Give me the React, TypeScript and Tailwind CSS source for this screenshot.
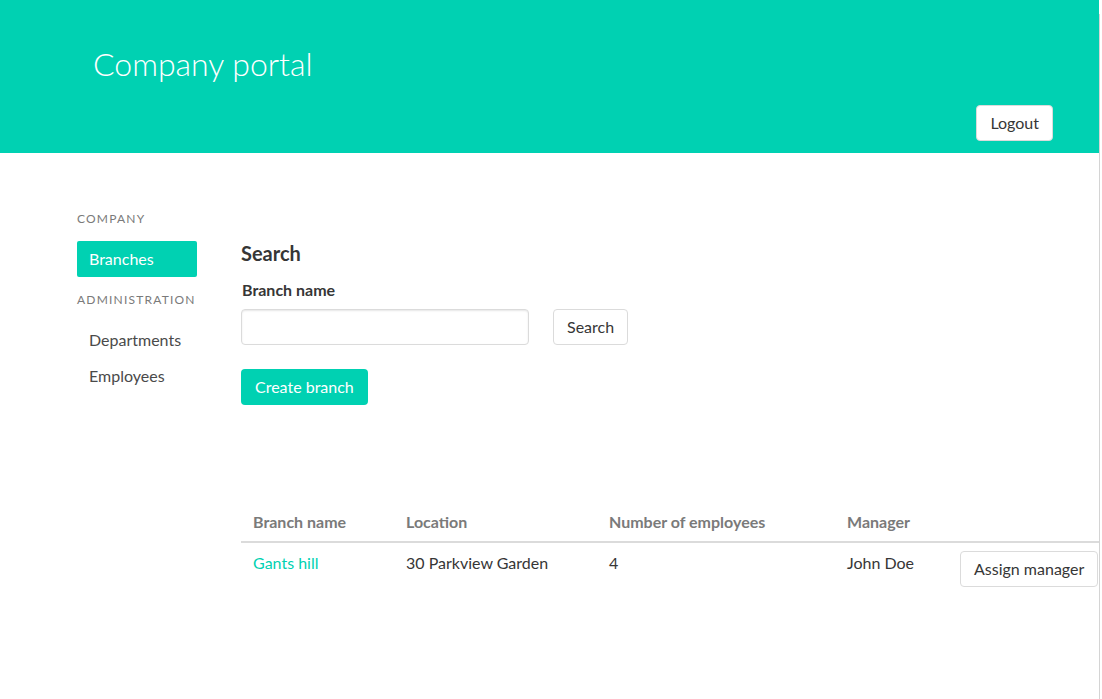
import React from "react";

const font = { fontFamily: '"Segoe UI", Lato, "Open Sans", sans-serif' };

function Button({ children, className = "" }: { children: React.ReactNode; className?: string }) {
  return (
    <button
      className={`h-9 rounded border border-[#dbdbdb] bg-white px-[13px] text-[16px] text-[#363636] ${className}`}
    >
      {children}
    </button>
  );
}

export default function App() {
  return (
    <div className="flex h-[699px] w-[1102px] overflow-hidden bg-white" style={font}>
      <div className="w-[1099px] shrink-0">
        <header className="relative h-[153px] bg-[#00d1b2]">
          <h1 className="absolute left-[93px] top-[44px] text-[32px] font-light leading-[40px] text-white">
            Company portal
          </h1>
          <div className="absolute right-[46px] top-[105px]">
            <Button>Logout</Button>
          </div>
        </header>

        <div className="flex pl-[77px] pt-[57px]">
          <aside className="w-[120px] shrink-0">
            <p className="text-[12px] uppercase leading-[18px] tracking-[0.1em] text-[#7a7a7a]">Company</p>
            <ul className="mt-[13px]">
              <li className="h-9 rounded-[2px] bg-[#00d1b2] px-3 text-[16px] leading-9 text-white">Branches</li>
            </ul>
            <p className="mt-[14px] text-[12px] uppercase leading-[18px] tracking-[0.1em] text-[#7a7a7a]">
              Administration
            </p>
            <ul className="mt-[13px] text-[16px] text-[#4a4a4a]">
              <li className="h-9 px-3 leading-9">Departments</li>
              <li className="h-9 px-3 leading-9">Employees</li>
            </ul>
          </aside>

          <main className="ml-[44px] flex-1 pt-[30px]">
            <h2 className="text-[20px] font-bold leading-[26px] text-[#363636]">Search</h2>
            <label className="mt-[12px] block pl-px text-[16px] font-bold leading-6 text-[#363636]">
              Branch name
            </label>
            <div className="mt-[7px] flex items-center gap-6">
              <input className="h-9 w-[288px] rounded border border-[#dbdbdb] bg-white px-3 shadow-[inset_0_1px_2px_rgba(10,10,10,0.1)] outline-none" />
              <Button>Search</Button>
            </div>
            <button className="mt-6 h-9 rounded border border-transparent bg-[#00d1b2] px-[13px] text-[16px] text-white">
              Create branch
            </button>

            <table className="mt-[101px] w-[858px] table-fixed border-collapse text-left text-[16px] text-[#363636]">
              <colgroup>
                <col className="w-[153px]" />
                <col className="w-[203px]" />
                <col className="w-[238px]" />
                <col className="w-[113px]" />
                <col className="w-[151px]" />
              </colgroup>
              <thead>
                <tr className="border-b-2 border-[#dbdbdb]">
                  <th className="px-3 py-[4px] pb-[7px] font-bold leading-6 text-[#7a7a7a]">Branch name</th>
                  <th className="px-3 py-[4px] pb-[7px] font-bold leading-6 text-[#7a7a7a]">Location</th>
                  <th className="px-3 py-[4px] pb-[7px] font-bold leading-6 text-[#7a7a7a]">Number of employees</th>
                  <th className="px-3 py-[4px] pb-[7px] font-bold leading-6 text-[#7a7a7a]">Manager</th>
                  <th className="px-3 py-[4px] pb-[7px]"></th>
                </tr>
              </thead>
              <tbody>
                <tr>
                  <td className="px-3 py-2 align-top leading-6 text-[#00d1b2]">Gants hill</td>
                  <td className="px-3 py-2 align-top leading-6">30 Parkview Garden</td>
                  <td className="px-3 py-2 align-top leading-6">4</td>
                  <td className="px-3 py-2 align-top leading-6">John Doe</td>
                  <td className="py-2 pl-3 pr-0 align-top">
                    <Button className="whitespace-nowrap">Assign manager</Button>
                  </td>
                </tr>
              </tbody>
            </table>
          </main>
        </div>
      </div>
      <div className="w-[3px] shrink-0 pt-[14px]">
        <div className="h-full w-px bg-[#d4d4d4]" />
      </div>
    </div>
  );
}
